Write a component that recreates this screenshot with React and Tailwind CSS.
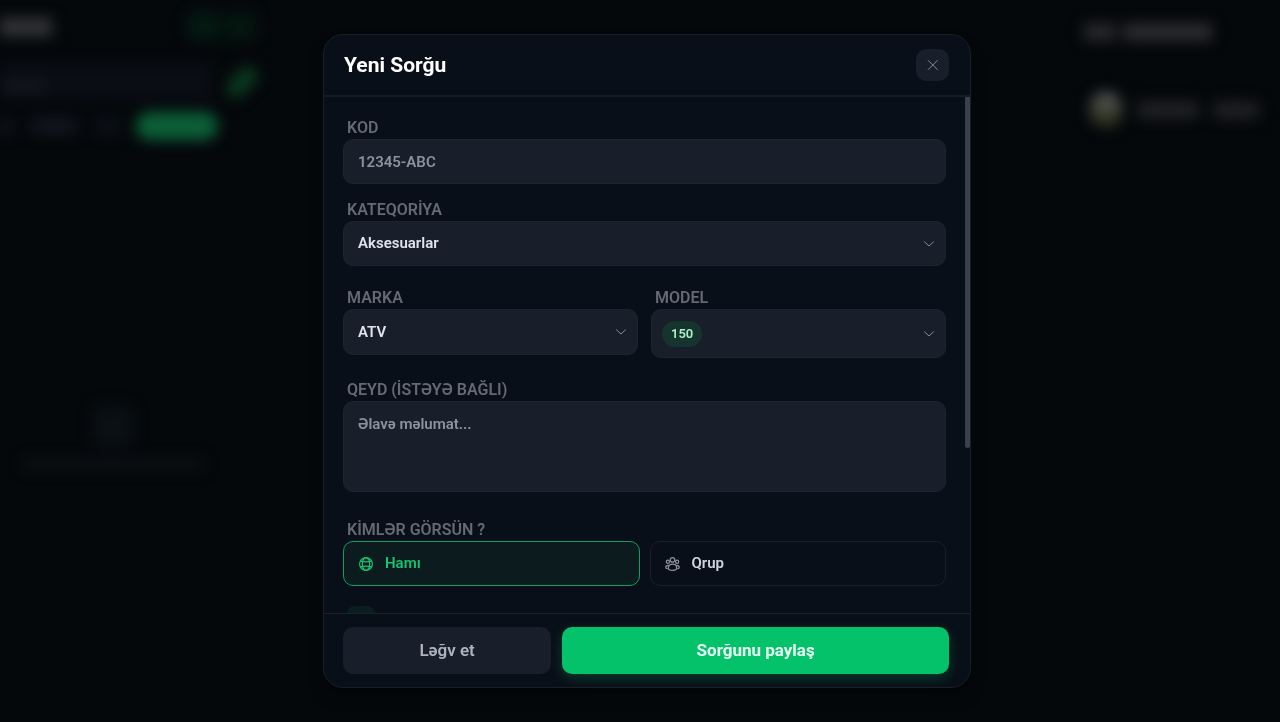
import React, { useState } from "react";

const labelClass =
  "block px-1 text-base leading-[22px] font-semibold text-[#646974]";
const fieldClass =
  "w-full rounded-[10px] border border-[#1d242e] bg-[#181f2a] px-[14px] text-[15px] font-semibold text-[#dfe3ee] outline-none";

const ChevronIcon = () => (
  <svg
    className="pointer-events-none h-3 w-3 text-[#868c99]"
    viewBox="0 0 12 12"
    fill="none"
    stroke="currentColor"
    strokeLinecap="round"
    strokeLinejoin="round"
  >
    <path d="M1.5 3.8L6 8L10.5 3.8" />
  </svg>
);

const CloseIcon = () => (
  <svg
    className="h-3 w-3"
    viewBox="0 0 12 12"
    fill="none"
    stroke="currentColor"
    strokeLinecap="round"
  >
    <path d="M1.3 1.5L10.3 10.5M10.3 1.5L1.3 10.5" />
  </svg>
);

const GlobeIcon = () => (
  <svg
    className="h-4 w-4"
    viewBox="0 0 16 16"
    fill="none"
    stroke="currentColor"
    strokeWidth="1.2"
  >
    <circle cx="8" cy="8" r="6.4" />
    <ellipse cx="8" cy="8" rx="3.7" ry="6.4" />
    <path d="M2.3 5.2C5.5 6 10.5 6 13.7 5.2M2.3 10.8C5.5 10 10.5 10 13.7 10.8" />
  </svg>
);

const GroupIcon = () => (
  <svg
    className="h-4 w-4 text-[#8f949e]"
    viewBox="0 0 16 16"
    fill="none"
    stroke="currentColor"
    strokeWidth="1.2"
    strokeLinecap="round"
  >
    <circle cx="7.5" cy="3.9" r="2.3" />
    <circle cx="2.9" cy="5.8" r="1.6" />
    <circle cx="12.1" cy="5.8" r="1.6" />
    <path d="M7.5 8.2C5.1 8.2 3.3 9.8 3.3 12C3.3 13.8 5.1 14.4 7.5 14.4C9.9 14.4 11.7 13.8 11.7 12C11.7 9.8 9.9 8.2 7.5 8.2Z" />
    <path d="M3.2 9.3C1.7 9.3 0.8 10.2 0.8 11.4C0.8 12.2 1.3 12.6 2.2 12.7M11.8 9.3C13.3 9.3 14.2 10.2 14.2 11.4C14.2 12.2 13.7 12.6 12.8 12.7" />
  </svg>
);

const SelectField = ({ id, label, options, height }) => (
  <div>
    <label htmlFor={id} className={labelClass}>
      {label}
    </label>
    <div className="relative">
      <select id={id} className={`${fieldClass} ${height} block appearance-none`}>
        {options.map((option) => (
          <option key={option}>{option}</option>
        ))}
      </select>
      <div className="pointer-events-none absolute inset-y-0 right-[11px] flex items-center">
        <ChevronIcon />
      </div>
    </div>
  </div>
);

// Page behind the dialog, dimmed and out of focus
const PageBehind = () => (
  <div className="flex h-screen justify-between overflow-hidden blur-[7px]" aria-hidden="true">
    <div className="w-[262px]">
      <div className="flex items-start justify-between pt-3 pr-1.5">
        <div className="mt-1.5 h-[18px] w-[52px] bg-[#343437]" />
        <div className="flex gap-1">
          <div className="h-7 w-8 rounded-lg bg-[#041a12]" />
          <div className="h-7 w-8 rounded-lg bg-[#041710]" />
        </div>
      </div>
      <div className="mt-6 flex items-center justify-between">
        <div className="flex h-9 w-[212px] items-center bg-[#0a0d14]">
          <div className="mt-2 h-3 w-11 bg-[#14171d]" />
        </div>
        <div className="mr-0.5 h-5 w-9 -rotate-45 rounded-full bg-[#0a3820]" />
      </div>
      <div className="mt-3 flex items-center gap-5">
        <div className="h-4 w-3 bg-[#11141c]" />
        <div className="h-4 w-11 bg-[#13161e]" />
        <div className="h-4 w-6 bg-[#0d1018]" />
        <div className="-ml-1 h-7 w-[82px] rounded-full bg-[#0c5f38]" />
      </div>
      <div className="flex flex-col items-center pt-[266px] pr-9">
        <div className="h-10 w-10 rounded-lg bg-[#0b1014]" />
        <div className="mt-3 h-3 w-[180px] bg-[#0d0f13]" />
      </div>
    </div>
    <div className="w-[196px] pt-6">
      <div className="flex gap-2">
        <div className="h-4 w-8 bg-[#2a2a2e]" />
        <div className="h-4 w-[88px] bg-[#2f2f33]" />
      </div>
      <div className="mt-[52px] flex items-center gap-4 pl-1.5">
        <div className="h-9 w-8 rounded-full bg-linear-to-b from-[#5a5e60] to-[#26270f]" />
        <div className="h-4 w-[60px] bg-[#222226]" />
        <div className="h-4 w-11 bg-[#222226]" />
      </div>
    </div>
  </div>
);

const App = () => {
  const [audience, setAudience] = useState("all");

  const selected = "border-[#0d9f60] bg-[#0c1b1d] text-[#13c473]";
  const unselected = "border-[#191e28] bg-transparent text-[#d0d4de]";

  return (
    <div className="min-h-screen bg-[#05080b] font-['Roboto','Noto_Sans',sans-serif]">
      <PageBehind />

      <div className="fixed inset-0 flex items-center justify-center py-[34px] pr-4 pl-[30px]">
        <div
          role="dialog"
          aria-labelledby="dialog-title"
          className="flex max-h-full w-full max-w-[648px] flex-col overflow-hidden rounded-[20px] border border-[#191f28] bg-[#090f18] shadow-lg shadow-black/50"
        >
          {/* Header */}
          <div className="flex shrink-0 items-center justify-between border-b-2 border-[#141b24] py-[14px] pr-[21px] pl-5">
            <h1 id="dialog-title" className="text-[21px] leading-8 font-bold text-white">
              Yeni Sorğu
            </h1>
            <button
              type="button"
              aria-label="Bağla"
              className="flex h-8 w-[33px] items-center justify-center rounded-[10px] bg-[#181f2a] text-[#868c99]"
            >
              <CloseIcon />
            </button>
          </div>

          {/* Form */}
          <div className="flex min-h-0 flex-1">
            <form className="min-w-0 flex-1 overflow-y-auto pt-5 pr-[19px] pb-[120px] pl-[19px] [scrollbar-width:none]">
              <label htmlFor="code" className={labelClass}>
                KOD
              </label>
              <input
                id="code"
                type="text"
                placeholder="12345-ABC"
                className={`${fieldClass} block h-[45px] placeholder:text-[#8d929f]`}
              />

              <div className="mt-[15px]">
                <SelectField
                  id="category"
                  label="KATEQORİYA"
                  options={["Aksesuarlar"]}
                  height="h-[45px]"
                />
              </div>

              <div className="mt-[21px] grid grid-cols-2 gap-[13px]">
                <SelectField id="brand" label="MARKA" options={["ATV"]} height="h-[46px]" />
                <div>
                  <label htmlFor="model" className={labelClass}>
                    MODEL
                  </label>
                  <button
                    id="model"
                    type="button"
                    aria-haspopup="listbox"
                    className="flex h-[49px] w-full items-center justify-between rounded-[10px] border border-[#1d242e] bg-[#181f2a] px-[10px]"
                  >
                    <span className="rounded-full bg-[#15342d] px-[9px] text-[13px] leading-[26px] font-semibold text-[#a9f0c8]">
                      150
                    </span>
                    <ChevronIcon />
                  </button>
                </div>
              </div>

              <div className="mt-[21px]">
                <label htmlFor="note" className={labelClass}>
                  QEYD (İSTƏYƏ BAĞLI)
                </label>
                <textarea
                  id="note"
                  placeholder="Əlavə məlumat..."
                  className={`${fieldClass} block h-[91px] resize-none py-[11px] leading-[22px] placeholder:text-[#8d929f]`}
                />
              </div>

              <div role="group" aria-labelledby="audience" className="mt-[27px]">
                <span id="audience" className={labelClass}>
                  KİMLƏR GÖRSÜN ?
                </span>
                <div className="grid grid-cols-2 gap-[10px]">
                  <button
                    type="button"
                    aria-pressed={audience === "all"}
                    onClick={() => setAudience("all")}
                    className={`flex h-[45px] items-center gap-[11px] rounded-[10px] border px-[14px] text-[15px] font-semibold ${
                      audience === "all" ? selected : unselected
                    }`}
                  >
                    <GlobeIcon />
                    Hamı
                  </button>
                  <button
                    type="button"
                    aria-pressed={audience === "group"}
                    onClick={() => setAudience("group")}
                    className={`flex h-[45px] items-center gap-[11px] rounded-[10px] border px-[14px] text-[15px] font-semibold ${
                      audience === "group" ? selected : unselected
                    }`}
                  >
                    <GroupIcon />
                    Qrup
                  </button>
                </div>
              </div>

              <div className="mt-5 ml-1 h-7 w-7 rounded-lg bg-[#0a1f1d]" />
            </form>
            {/* Scroll thumb */}
            <div className="w-[5px] shrink-0">
              <div className="h-[68%] rounded-b-sm bg-[#3a404e]" />
            </div>
          </div>

          {/* Footer */}
          <div className="flex shrink-0 gap-[11px] border-t border-[#1b212b] py-[13px] pr-[21px] pl-[19px]">
            <button
              type="button"
              className="h-[47px] flex-[7] rounded-[10px] bg-[#181f2a] text-[17px] font-semibold text-[#aeb3c0]"
            >
              Ləğv et
            </button>
            <button
              type="button"
              className="h-[47px] flex-[13] rounded-[10px] bg-[#03c26a] text-[17px] font-bold text-[#eafff4] shadow-[0_4px_12px_#03c26a40]"
            >
              Sorğunu paylaş
            </button>
          </div>
        </div>
      </div>
    </div>
  );
};

export default App;
